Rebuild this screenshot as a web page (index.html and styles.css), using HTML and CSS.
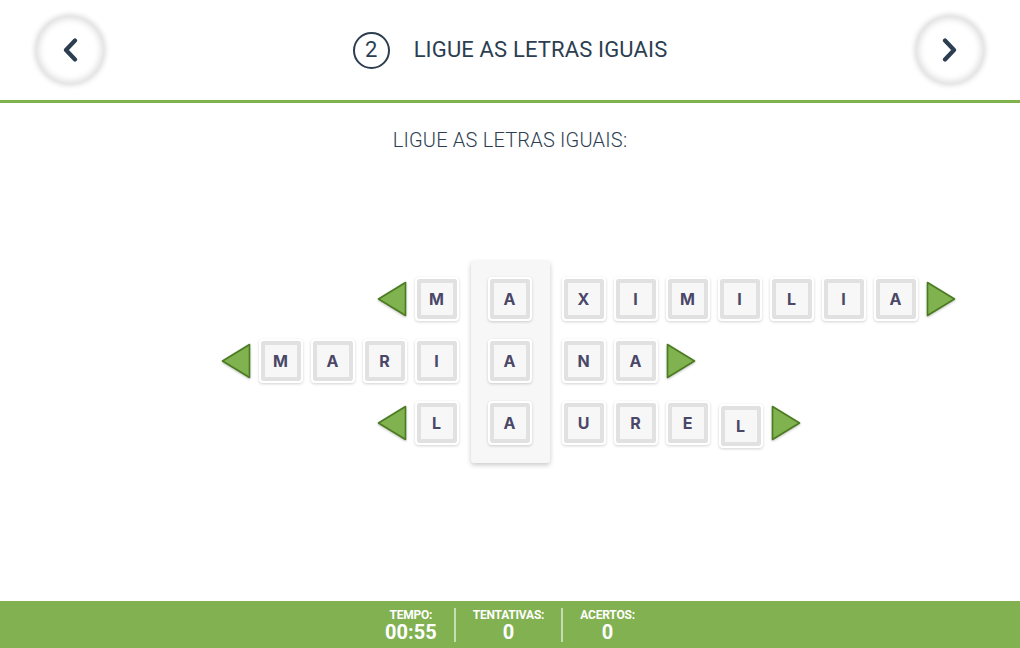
FILE: index.html
```html
<!DOCTYPE html>
<html lang="pt">
<head>
<meta charset="utf-8">
<title>Ligue as letras iguais</title>
<link rel="stylesheet" href="styles.css">
</head>
<body>
<div class="app">
  <header class="topbar">
    <button class="nav-btn" aria-label="Anterior">
      <svg class="chev" viewBox="0 0 16 24" width="16" height="24"><path d="M13 2.5 L4 12 L13 21.5"/></svg>
    </button>
    <div class="title-group">
      <span class="step">2</span>
      <h1 class="title">LIGUE AS LETRAS IGUAIS</h1>
    </div>
    <button class="nav-btn" aria-label="Próximo">
      <svg class="chev" viewBox="0 0 16 24" width="16" height="24"><path d="M3 2.5 L12 12 L3 21.5"/></svg>
    </button>
  </header>

  <main class="content">
    <p class="prompt">LIGUE AS LETRAS IGUAIS:</p>

    <div class="board">
      <div class="side side-left">
        <div class="row">
          <svg class="arrow" viewBox="0 0 30 36" width="30" height="36"><polygon points="1.5,18 28.5,1.5 28.5,34.5"/></svg>
          <span class="tile">M</span>
        </div>
        <div class="row">
          <svg class="arrow" viewBox="0 0 30 36" width="30" height="36"><polygon points="1.5,18 28.5,1.5 28.5,34.5"/></svg>
          <span class="tile">M</span><span class="tile">A</span><span class="tile">R</span><span class="tile">I</span>
        </div>
        <div class="row">
          <svg class="arrow" viewBox="0 0 30 36" width="30" height="36"><polygon points="1.5,18 28.5,1.5 28.5,34.5"/></svg>
          <span class="tile">L</span>
        </div>
      </div>

      <div class="pivot">
        <span class="tile">A</span>
        <span class="tile">A</span>
        <span class="tile">A</span>
      </div>

      <div class="side side-right">
        <div class="row">
          <span class="tile">X</span><span class="tile">I</span><span class="tile">M</span><span class="tile">I</span><span class="tile">L</span><span class="tile">I</span><span class="tile">A</span>
          <svg class="arrow" viewBox="0 0 30 36" width="30" height="36"><polygon points="1.5,1.5 28.5,18 1.5,34.5"/></svg>
        </div>
        <div class="row">
          <span class="tile">N</span><span class="tile">A</span>
          <svg class="arrow" viewBox="0 0 30 36" width="30" height="36"><polygon points="1.5,1.5 28.5,18 1.5,34.5"/></svg>
        </div>
        <div class="row">
          <span class="tile">U</span><span class="tile">R</span><span class="tile">E</span><span class="tile tile-loose">L</span>
          <svg class="arrow" viewBox="0 0 30 36" width="30" height="36"><polygon points="1.5,1.5 28.5,18 1.5,34.5"/></svg>
        </div>
      </div>
    </div>
  </main>

  <footer class="statusbar">
    <div class="stat">
      <span class="stat-label">TEMPO:</span>
      <span class="stat-value">00:55</span>
    </div>
    <div class="stat">
      <span class="stat-label">TENTATIVAS:</span>
      <span class="stat-value">0</span>
    </div>
    <div class="stat">
      <span class="stat-label">ACERTOS:</span>
      <span class="stat-value">0</span>
    </div>
  </footer>
</div>
</body>
</html>
```

FILE: styles.css
```css
html, body {
  margin: 0;
  padding: 0;
  background: #ffffff;
}

body {
  font-family: Roboto, "Liberation Sans", Arial, sans-serif;
  color: #2c3e50;
}

.app {
  width: 1020px;
  height: 648px;
  display: flex;
  flex-direction: column;
  overflow: hidden;
}

/* ---------- top bar ---------- */
.topbar {
  height: 100px;
  flex: 0 0 auto;
  display: flex;
  align-items: center;
  justify-content: space-between;
  padding: 0 36px;
  border-bottom: 3px solid #7fb14c;
}

.nav-btn {
  width: 68px;
  height: 68px;
  border-radius: 50%;
  border: none;
  padding: 0;
  background: #ffffff;
  box-shadow: 0 0 5px 2px rgba(0, 0, 0, 0.13), inset 0 0 6px 3px rgba(0, 0, 0, 0.12);
  display: flex;
  align-items: center;
  justify-content: center;
  cursor: pointer;
}

.chev path {
  fill: none;
  stroke: #2c3e50;
  stroke-width: 4.2;
  stroke-linecap: round;
  stroke-linejoin: round;
}

.title-group {
  display: flex;
  align-items: center;
  gap: 24px;
}

.step {
  width: 37px;
  height: 37px;
  box-sizing: border-box;
  border: 2px solid #2c3e50;
  border-radius: 50%;
  display: flex;
  align-items: center;
  justify-content: center;
  font-size: 22px;
  line-height: 1;
  color: #2c3e50;
}

.title {
  margin: 0;
  font-size: 22px;
  font-weight: 400;
  letter-spacing: 0.15px;
  color: #2c3e50;
  line-height: 26px;
}

/* ---------- content ---------- */
.content {
  flex: 1 1 auto;
  padding-top: 25px;
}

.prompt {
  margin: 0;
  text-align: center;
  font-size: 20px;
  font-weight: 300;
  letter-spacing: 0.2px;
  line-height: 24px;
  color: #2c3e50;
}

.board {
  margin-top: 109px;
  display: grid;
  grid-template-columns: 1fr auto 1fr;
  column-gap: 12px;
  align-items: start;
}

.side {
  display: flex;
  flex-direction: column;
  gap: 18px;
  padding-top: 16px;
}

.side-left {
  align-items: flex-end;
}

.side-right {
  align-items: flex-start;
}

.row {
  height: 44px;
  display: flex;
  align-items: center;
  gap: 8px;
}

.pivot {
  display: flex;
  flex-direction: column;
  gap: 18px;
  padding: 16px 18px 18px 17px;
  background: #f7f7f7;
  border-radius: 3px;
  box-shadow: 0 2px 5px rgba(0, 0, 0, 0.22);
}

.tile {
  width: 44px;
  height: 44px;
  box-sizing: border-box;
  border: 2px solid #ffffff;
  border-radius: 4px;
  background: #f7f7f7;
  box-shadow: inset 0 0 0 4px #e1e1e1, 0 1px 3px rgba(0, 0, 0, 0.18);
  display: flex;
  align-items: center;
  justify-content: center;
  font-family: Inter, "Open Sans", sans-serif;
  font-weight: 700;
  font-size: 16px;
  color: #4a4768;
}

.tile-loose {
  margin: 3px 0 -3px 1px;
}

.arrow {
  display: block;
  overflow: visible;
  filter: drop-shadow(0 1px 1px rgba(0, 0, 0, 0.25));
}

.arrow polygon {
  fill: #80b24f;
  stroke: #4a7b20;
  stroke-width: 1.6;
  stroke-linejoin: round;
}

/* ---------- status bar ---------- */
.statusbar {
  height: 47px;
  flex: 0 0 auto;
  background: #82b152;
  display: flex;
  justify-content: center;
  align-items: center;
  color: #ffffff;
}

.stat {
  display: flex;
  flex-direction: column;
  align-items: center;
  padding: 0 17px;
  height: 34px;
}

.stat + .stat {
  border-left: 2px solid rgba(255, 255, 255, 0.55);
}

.stat-label {
  font-size: 12px;
  font-weight: 700;
  line-height: 14px;
  letter-spacing: -0.2px;
}

.stat-value {
  font-size: 20px;
  font-weight: 700;
  line-height: 20px;
}
```
